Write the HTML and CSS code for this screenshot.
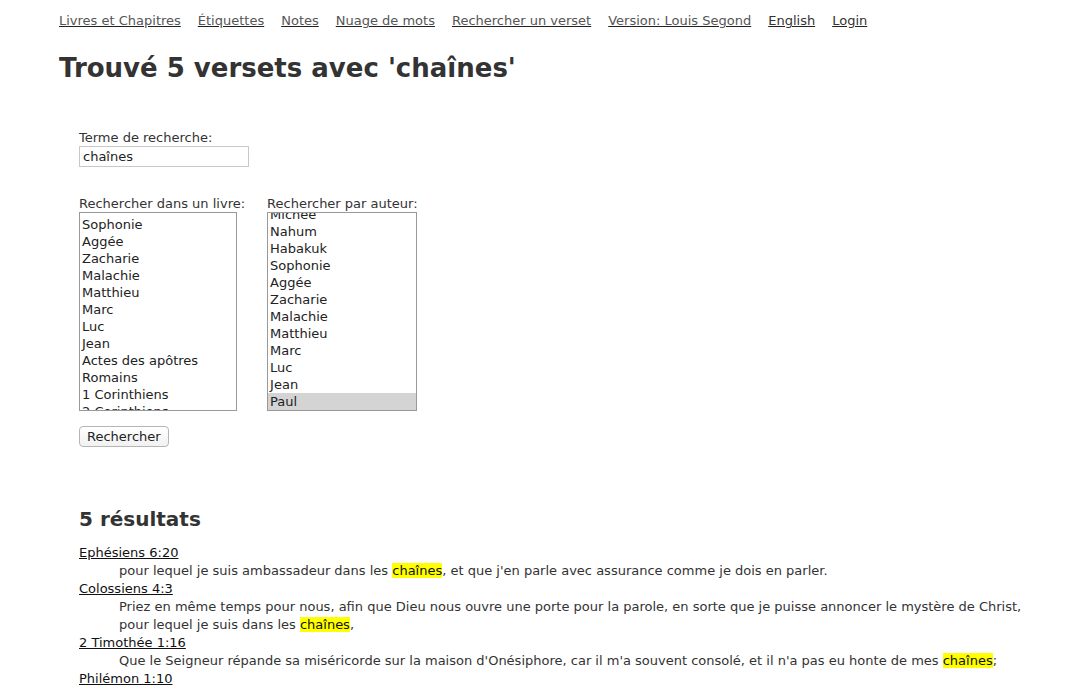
FILE: index.html
```html
<!DOCTYPE html>
<html lang="fr">
<head>
<meta charset="utf-8">
<title>Trouvé 5 versets avec 'chaînes'</title>
<link rel="stylesheet" href="styles.css">
</head>
<body>
<div class="page">
  <nav class="nav">
    <a href="#">Livres et Chapitres</a>
    <a href="#">Étiquettes</a>
    <a href="#">Notes</a>
    <a href="#">Nuage de mots</a>
    <a href="#">Rechercher un verset</a>
    <a href="#">Version: Louis Segond</a>
    <a href="#" class="dark">English</a>
    <a href="#" class="dark">Login</a>
  </nav>
  <h1 class="title">Trouvé 5 versets avec 'chaînes'</h1>

  <form class="search">
    <div class="field">
      <label>Terme de recherche:</label>
      <div class="input">chaînes</div>
    </div>
    <div class="selects">
      <div class="field">
        <label>Rechercher dans un livre:</label>
        <div class="listbox book">
          <div class="opts">
            <div>Sophonie</div>
            <div>Aggée</div>
            <div>Zacharie</div>
            <div>Malachie</div>
            <div>Matthieu</div>
            <div>Marc</div>
            <div>Luc</div>
            <div>Jean</div>
            <div>Actes des apôtres</div>
            <div>Romains</div>
            <div>1 Corinthiens</div>
            <div>2 Corinthiens</div>
            <div>Galates</div>
          </div>
        </div>
      </div>
      <div class="field">
        <label>Rechercher par auteur:</label>
        <div class="listbox author">
          <div class="opts">
            <div>Jonas</div>
            <div>Michée</div>
            <div>Nahum</div>
            <div>Habakuk</div>
            <div>Sophonie</div>
            <div>Aggée</div>
            <div>Zacharie</div>
            <div>Malachie</div>
            <div>Matthieu</div>
            <div>Marc</div>
            <div>Luc</div>
            <div>Jean</div>
            <div class="sel">Paul</div>
          </div>
        </div>
      </div>
    </div>
    <button type="button" class="btn">Rechercher</button>
  </form>

  <section class="results">
    <h2>5 résultats</h2>
    <dl>
      <dt><a href="#">Ephésiens 6:20</a></dt>
      <dd>pour lequel je suis ambassadeur dans les <mark>chaînes</mark>, et que j'en parle avec assurance comme je dois en parler.</dd>
      <dt><a href="#">Colossiens 4:3</a></dt>
      <dd>Priez en même temps pour nous, afin que Dieu nous ouvre une porte pour la parole, en sorte que je puisse annoncer le mystère de Christ, pour lequel je suis dans les <mark>chaînes</mark>,</dd>
      <dt><a href="#">2 Timothée 1:16</a></dt>
      <dd>Que le Seigneur répande sa miséricorde sur la maison d'Onésiphore, car il m'a souvent consolé, et il n'a pas eu honte de mes <mark>chaînes</mark>;</dd>
      <dt><a href="#">Philémon 1:10</a></dt>
      <dd>je te prie pour mon enfant, que j'ai engendré étant dans les <mark>chaînes</mark>, Onésime,</dd>
      <dt><a href="#">Hébreux 11:36</a></dt>
      <dd>d'autres subirent les moqueries et le fouet, les <mark>chaînes</mark> et la prison;</dd>
    </dl>
  </section>
</div>
</body>
</html>
```

FILE: styles.css
```css
html, body {
  margin: 0;
  padding: 0;
  background: #fff;
}
body {
  font-family: "DejaVu Sans", Verdana, sans-serif;
  font-size: 13px;
  line-height: 17px;
  color: #333;
}
.page {
  padding: 12px 0 0 59px;
}
.nav {
  display: flex;
  gap: 17px;
  height: 17px;
}
.nav a {
  color: #555;
  text-decoration: underline;
  text-decoration-color: #222;
}
.nav a.dark {
  color: #333;
}
.title {
  margin: 22px 0 0 0;
  font-size: 26px;
  line-height: 34px;
  font-weight: bold;
  color: #333;
}
.search {
  margin: 44px 0 0 20px;
  display: flex;
  flex-direction: column;
  align-items: flex-start;
}
.field {
  display: flex;
  flex-direction: column;
}
.field label {
  display: block;
  height: 17px;
  line-height: 17px;
}
.input {
  width: 162px;
  height: 19px;
  line-height: 19px;
  padding: 0 3px;
  border: 1px solid #c8c8c8;
  color: #222;
}
.selects {
  margin-top: 28px;
  display: flex;
  gap: 22px;
}
.listbox {
  height: 197px;
  border: 1px solid #999;
  overflow: hidden;
  display: flex;
  flex-direction: column;
  color: #222;
}
.listbox.book {
  width: 156px;
}
.listbox.author {
  width: 148px;
  justify-content: flex-end;
}
.opts {
  display: flex;
  flex-direction: column;
  flex-shrink: 0;
  padding-top: 3px;
}
.author .opts {
  padding-top: 0;
}
.opts div {
  height: 17px;
  line-height: 17px;
  padding: 0 2px;
  white-space: nowrap;
  flex-shrink: 0;
}
.opts div.sel {
  background: #d4d4d4;
}
.btn {
  margin-top: 15px;
  font-family: "DejaVu Sans", Verdana, sans-serif;
  font-size: 13px;
  line-height: 17px;
  color: #222;
  height: 21px;
  padding: 0 7px;
  border: 1px solid #b5b5b5;
  border-radius: 4px;
  background: linear-gradient(#fff, #f1f1f1);
}
.results {
  margin: 59px 0 0 20px;
  padding-right: 30px;
}
.results h2 {
  margin: 0;
  font-size: 20px;
  line-height: 26px;
  font-weight: bold;
  color: #333;
}
.results dl {
  margin: 12px 0 0 0;
  line-height: 18px;
}
.results dt a {
  color: #111;
  text-decoration: underline;
}
.results dd {
  margin: 0 0 0 40px;
}
mark {
  background: #ffff00;
  color: #111;
}
```
